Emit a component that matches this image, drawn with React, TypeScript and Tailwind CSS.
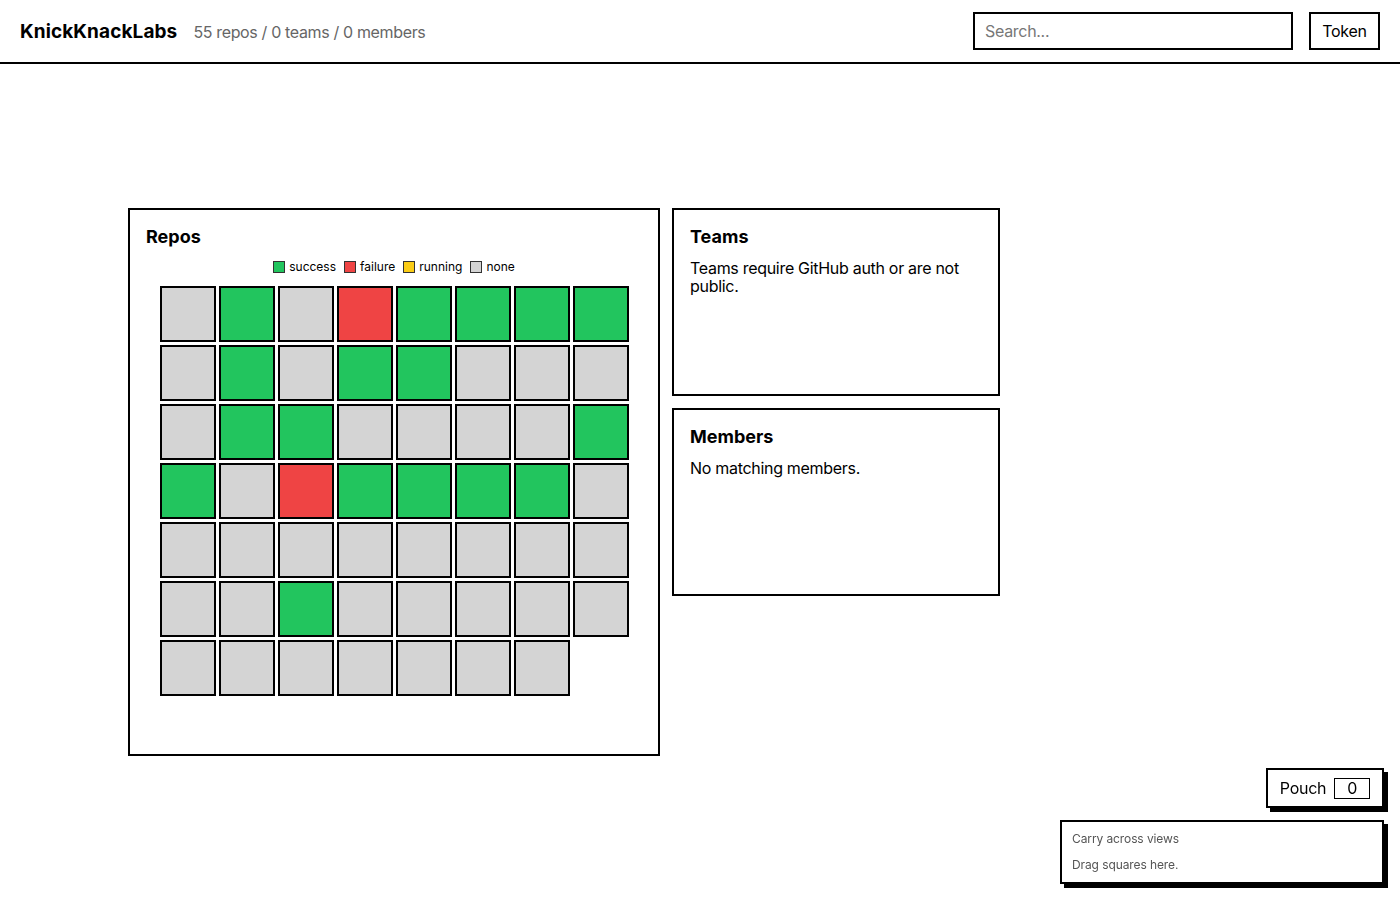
import React from "react";

const S = "s", F = "f", N = "n";
const cells: string[] = [
  N, S, N, F, S, S, S, S,
  N, S, N, S, S, N, N, N,
  N, S, S, N, N, N, N, S,
  S, N, F, S, S, S, S, N,
  N, N, N, N, N, N, N, N,
  N, N, S, N, N, N, N, N,
  N, N, N, N, N, N, N,
];

function cellClass(c: string) {
  if (c === S) return "bg-[#22c55e]";
  if (c === F) return "bg-[#ef4444]";
  return "bg-[#d4d4d4]";
}

export default function App() {
  return (
    <div className="min-h-[900px] bg-white text-black" style={{ fontFamily: "Inter, 'Noto Sans', sans-serif" }}>
      <header className="flex h-[64px] items-center justify-between border-b-2 border-black px-5">
        <div className="flex items-baseline gap-4">
          <span className="text-[19px] font-bold leading-none tracking-[0.1px]">KnickKnackLabs</span>
          <span className="text-[16px] leading-none tracking-[-0.35px] text-[#666]">55 repos / 0 teams / 0 members</span>
        </div>
        <div className="flex items-center gap-4">
          <input
            placeholder="Search..."
            className="h-[38px] w-[320px] border-2 border-black px-[10px] text-[16px] tracking-[-0.3px] outline-none placeholder:text-[#777]"
          />
          <button className="h-[38px] w-[71px] border-2 border-black text-[16px] leading-none tracking-[-0.3px]">Token</button>
        </div>
      </header>

      <main className="flex items-start gap-3 pl-[128px] pt-[144px]">
        <section className="h-[548px] w-[532px] border-2 border-black p-4">
          <h2 className="text-[18px] font-bold leading-[22px]">Repos</h2>
          <div className="mt-3 flex justify-center gap-2 text-[12px] leading-[14px]">
            {[
              ["bg-[#22c55e]", "success"],
              ["bg-[#ef4444]", "failure"],
              ["bg-[#facc15]", "running"],
              ["bg-[#d4d4d4]", "none"],
            ].map(([c, l]) => (
              <div key={l} className="flex items-center gap-1">
                <span className={`h-3 w-3 border border-[#333] ${c}`} />
                <span>{l}</span>
              </div>
            ))}
          </div>
          <div className="mt-3 flex justify-center">
            <div className="grid grid-cols-[repeat(8,56px)] gap-[3px]">
              {cells.map((c, i) => (
                <div key={i} className={`h-[56px] w-[56px] border-2 border-black ${cellClass(c)}`} />
              ))}
            </div>
          </div>
        </section>

        <div className="flex flex-col gap-3">
          <section className="h-[188px] w-[328px] border-2 border-black p-4">
            <h2 className="text-[18px] font-bold leading-[22px]">Teams</h2>
            <p className="mt-[11px] text-[16px] leading-[18px] tracking-[-0.3px]">Teams require GitHub auth or are not public.</p>
          </section>
          <section className="h-[188px] w-[328px] border-2 border-black p-4">
            <h2 className="text-[18px] font-bold leading-[22px]">Members</h2>
            <p className="mt-[11px] text-[16px] leading-[18px] tracking-[-0.3px]">No matching members.</p>
          </section>
        </div>
      </main>

      <div className="fixed bottom-4 right-4 flex flex-col items-end gap-3">
        <button className="flex h-[40px] w-[118px] items-center justify-center gap-2 border-2 border-black bg-white text-[16px] tracking-[-0.3px] shadow-[4px_4px_0_#000]">
          <span>Pouch</span>
          <span className="flex h-[21px] w-[36px] items-center justify-center border border-black leading-none">0</span>
        </button>
        <div className="h-[64px] w-[324px] border-2 border-black bg-white px-[10px] py-[10px] text-[12px] leading-[14px] tracking-[-0.1px] text-[#555] shadow-[4px_4px_0_#000]">
          <div>Carry across views</div>
          <div className="mt-3">Drag squares here.</div>
        </div>
      </div>
    </div>
  );
}
